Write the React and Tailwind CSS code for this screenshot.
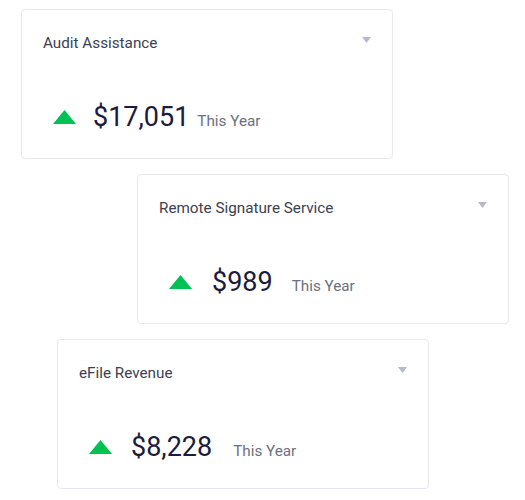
import React from "react";

const cards = [
  { title: "Audit Assistance", value: "$17,051", offset: "ml-[21px]", vml: "ml-[17px]", tml: "ml-[8px]" },
  { title: "Remote Signature Service", value: "$989", offset: "ml-[137px]", vml: "ml-[20px]", tml: "ml-[19px]" },
  { title: "eFile Revenue", value: "$8,228", offset: "ml-[57px]", vml: "ml-[19px]", tml: "ml-[21px]" },
];

function Card({ title, value, offset, vml, tml }) {
  return (
    <div
      className={`${offset} w-[372px] h-[150px] border border-[#e7e7f3] rounded-[4px] bg-white pt-[23px] pl-[21px] pr-[21px]`}
    >
      <div className="flex justify-between items-start">
        <span className="text-[15.25px] leading-[20px] text-[#3b4152]">{title}</span>
        <svg width="9" height="6" viewBox="0 0 9 6" className="mt-[4px]">
          <polygon points="0,0 9,0 4.5,6" fill="#b7bac8" />
        </svg>
      </div>
      <div className="flex items-center mt-[49px]">
        <svg width="23" height="14" viewBox="0 0 23 14" className="ml-[10px]">
          <polygon points="0,14 11.5,0 23,14" fill="#00c254" />
        </svg>
        <div className="flex items-baseline">
          <span className={`${vml} text-[27px] leading-[30px] text-[#1c1b3b]`}>{value}</span>
          <span className={`${tml} text-[15.25px] leading-[20px] text-[#6b7080]`}>This Year</span>
        </div>
      </div>
    </div>
  );
}

export default function App() {
  return (
    <div
      className="w-[525px] h-[500px] bg-white pt-[9px] flex flex-col gap-[15px]"
      style={{ fontFamily: "Roboto, 'Liberation Sans', sans-serif" }}
    >
      {cards.map((c) => (
        <Card key={c.title} {...c} />
      ))}
    </div>
  );
}
